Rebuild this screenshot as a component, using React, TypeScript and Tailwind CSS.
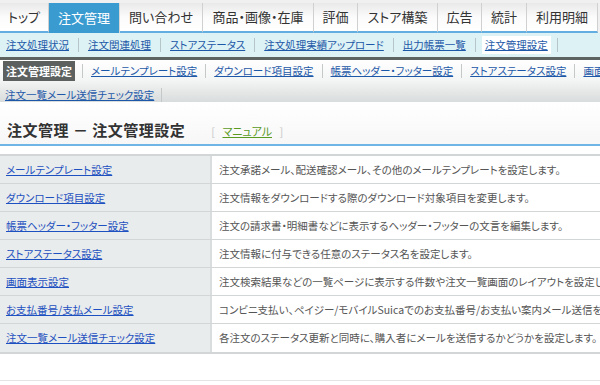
const jp = "font-['Noto_Sans_CJK_JP','Noto_Sans',sans-serif] [font-feature-settings:'palt']";

const tabs = [
  { label: "トップ", w: "w-[49px]" },
  { label: "注文管理", w: "w-[71px]", active: true },
  { label: "問い合わせ", w: "w-[83px]" },
  { label: "商品・画像・在庫", w: "w-[111px]" },
  { label: "評価", w: "w-[44px]" },
  { label: "ストア構築", w: "w-[80px]" },
  { label: "広告", w: "w-[44px]" },
  { label: "統計", w: "w-[45px]" },
  { label: "利用明細", w: "w-[71px]" },
];

const subLinks = [
  "注文処理状況",
  "注文関連処理",
  "ストアステータス",
  "注文処理実績アップロード",
  "出力帳票一覧",
  "注文管理設定",
];

const settingLinks = [
  "メールテンプレート設定",
  "ダウンロード項目設定",
  "帳票ヘッダー・フッター設定",
  "ストアステータス設定",
  "画面表示設定",
  "お支払番号/支払メール設定",
];

const rows = [
  ["メールテンプレート設定", "注文承諾メール、配送確認メール、その他のメールテンプレートを設定します。"],
  ["ダウンロード項目設定", "注文情報をダウンロードする際のダウンロード対象項目を変更します。"],
  ["帳票ヘッダー・フッター設定", "注文の請求書・明細書などに表示するヘッダー・フッターの文言を編集します。"],
  ["ストアステータス設定", "注文情報に付与できる任意のステータス名を設定します。"],
  ["画面表示設定", "注文検索結果などの一覧ページに表示する件数や注文一覧画面のレイアウトを設定します。"],
  ["お支払番号/支払メール設定", "コンビニ支払い、ペイジー/モバイルSuicaでのお支払番号/お支払い案内メール送信を設定します。"],
  ["注文一覧メール送信チェック設定", "各注文のステータス更新と同時に、購入者にメールを送信するかどうかを設定します。"],
];

export default function App() {
  return (
    <div className={`w-[600px] h-[385px] overflow-hidden bg-white ${jp}`}>
      <div className="w-[900px]">
        {/* global tabs */}
        <div className="flex pt-[3px] bg-[#f0f0f0]">
          {tabs.map((t) =>
            t.active ? (
              <div
                key={t.label}
                className={`${t.w} h-[30px] flex items-center justify-center bg-[#3a9bd1] text-white text-[13px] border-r border-[#d8d8d8]`}
              >
                {t.label}
              </div>
            ) : (
              <div
                key={t.label}
                className={`${t.w} h-[30px] flex items-center justify-center bg-gradient-to-b from-[#e9e9e9] via-[#fbfbfb] to-white text-[#333] text-[13px] border-r border-[#d0d0d0] border-b-2 border-b-[#62aee0]`}
              >
                {t.label}
              </div>
            )
          )}
        </div>

        {/* sub nav */}
        <div className="h-[27px] bg-[#dcf2f4] flex items-center pl-[3px] border-b-[3px] border-[#5c6361]">
          {subLinks.map((s, i) => (
            <div key={s} className="flex items-center">
              <span
                className={`px-[3px] py-[1px] text-[10.5px] text-[#1d58a8] underline ${
                  i === subLinks.length - 1 ? "bg-white" : ""
                }`}
              >
                {s}
              </span>
              <span className="mx-[6px] w-px h-[14px] bg-[#b6c6c8]" />
            </div>
          ))}
        </div>

        {/* settings nav */}
        <div className="h-[42px] pt-[1px] bg-gradient-to-b from-white via-[#f3f4f4] to-[#d9dcdc] flex flex-col">
          <div className="flex items-center pl-[3px] h-[20px]">
            <span className="h-[20px] px-[3px] flex items-center bg-[#5c615f] text-white text-[11px] font-bold">
              注文管理設定
            </span>
            <span className="mx-[7px] w-px h-[14px] bg-[#c4c8c8]" />
            {settingLinks.map((s) => (
              <div key={s} className="flex items-center">
                <span className="px-[1px] text-[10.5px] text-[#1d58a8] underline">{s}</span>
                <span className="mx-[7px] w-px h-[14px] bg-[#c4c8c8]" />
              </div>
            ))}
          </div>
          <div className="flex items-center pl-[5px] h-[20px] mt-[6px]">
            <span className="text-[10.5px] text-[#1d58a8] underline">注文一覧メール送信チェック設定</span>
            <span className="mx-[7px] w-px h-[14px] bg-[#c4c8c8]" />
          </div>
        </div>

        {/* title */}
        <div className="h-[44px] flex items-end pb-[3px] pl-[7px] border-b-2 border-[#6fb6e6] bg-gradient-to-b from-white to-[#f7f7f7]">
          <h1 className="text-[15px] font-bold text-[#333] tracking-[0.5px]">注文管理 － 注文管理設定</h1>
          <span className="ml-[26px] mb-[2px] text-[11px] text-[#c8c8c8]">
            [ <span className="mx-[5px] text-[#5a9a1e] underline">マニュアル</span> ]
          </span>
        </div>

        {/* table */}
        <div className="mt-[8px] border-t-2 border-b-2 border-[#d3d6d6]">
          {rows.map(([name, desc], i) => (
            <div
              key={name}
              className={`flex h-[28px] ${i < rows.length - 1 ? "border-b border-[#d3d6d6]" : ""}`}
            >
              <div className="w-[212px] shrink-0 bg-[#e9ecec] border-r-2 border-[#dadddd] flex items-center pl-[6px]">
                <span className="text-[10.5px] text-[#1d50c0] underline">{name}</span>
              </div>
              <div className="flex items-center pl-[7px] text-[10.5px] text-[#555] whitespace-nowrap">{desc}</div>
            </div>
          ))}
        </div>
        <div className="mt-[26px] border-t border-[#e4e4e4]" />
      </div>
    </div>
  );
}
